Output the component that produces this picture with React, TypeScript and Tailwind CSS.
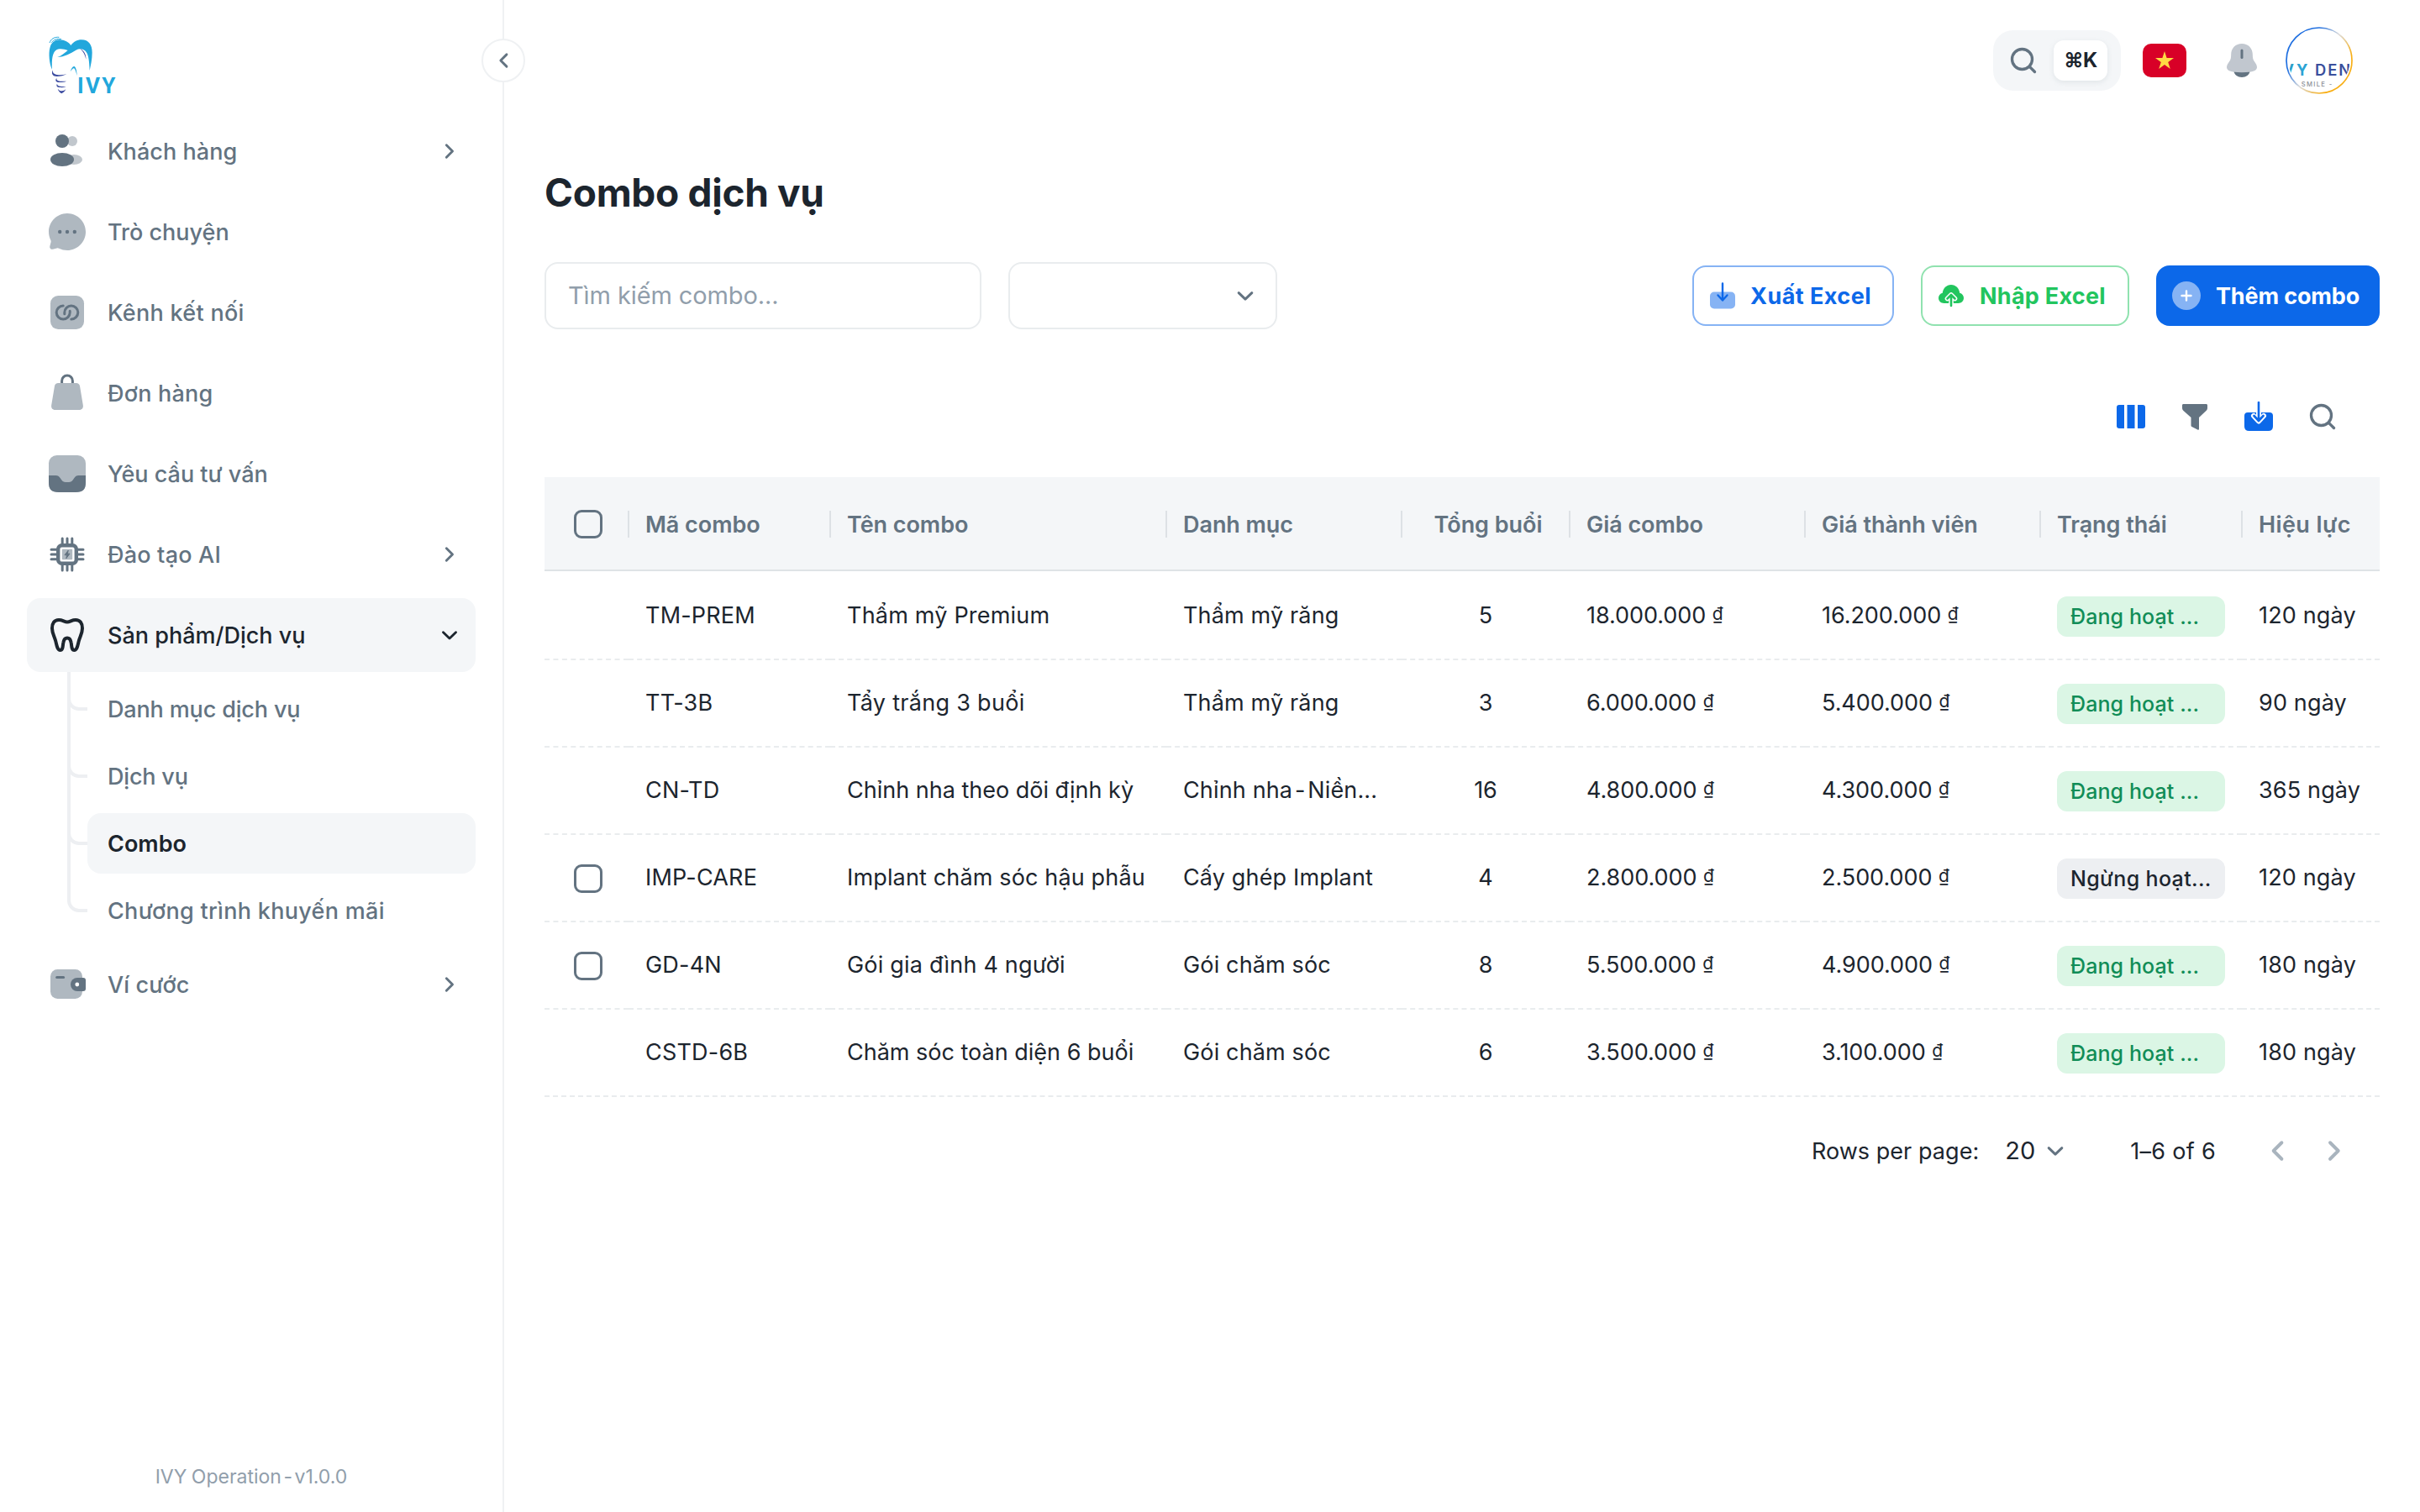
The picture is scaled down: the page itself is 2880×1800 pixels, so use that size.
import type { ReactNode } from "react";

type IconProps = { className?: string };

function Chevron({ d, className = "" }: { d: "left" | "right" | "down"; className?: string }) {
  const paths = { left: "M14.5 7.5L10 12l4.5 4.5", right: "M9.7 7.5l4.5 4.5-4.5 4.5", down: "M7.3 10l4.7 4.5 4.7-4.5" };
  return (
    <svg viewBox="0 0 24 24" className={`shrink-0 ${className}`} fill="none" stroke="currentColor" strokeWidth="1.8" strokeLinecap="round" strokeLinejoin="round">
      <path d={paths[d]} />
    </svg>
  );
}

function NavSvg({ children }: { children: ReactNode }) {
  return <svg viewBox="0 0 24 24" className="size-12 shrink-0" fill="none">{children}</svg>;
}

const UsersIcon = () => (
  <NavSvg>
    <circle cx="15" cy="6" r="3" fill="#c1c7cd" />
    <ellipse cx="16" cy="17" rx="5" ry="3" fill="#c1c7cd" />
    <circle cx="9" cy="6" r="4" fill="currentColor" />
    <ellipse cx="9" cy="17" rx="7" ry="4" fill="currentColor" />
  </NavSvg>
);
const ChatIcon = () => (
  <NavSvg>
    <g transform="translate(-1.2 -1.2) scale(1.1)">
      <path fill="#afb8c0" d="M12 22c5.523 0 10-4.477 10-10S17.523 2 12 2S2 6.477 2 12c0 1.6.376 3.112 1.043 4.453c.178.356.237.763.134 1.148l-.595 2.226a1.3 1.3 0 0 0 1.591 1.592l2.226-.596a1.63 1.63 0 0 1 1.149.133A9.96 9.96 0 0 0 12 22" />
      <g fill="currentColor"><circle cx="8" cy="12" r="1" /><circle cx="12" cy="12" r="1" /><circle cx="16" cy="12" r="1" /></g>
    </g>
  </NavSvg>
);
const LinkIcon = () => (
  <NavSvg>
    <rect x="2" y="2" width="20" height="20" rx="4.600" fill="#afb8c0" />
    <g stroke="currentColor" strokeWidth="1.500" strokeLinecap="round">
      <path d="M9.600 8a4 4 0 1 0 0 8a4 4 0 0 0 4-4v-.9" />
      <path d="M14.400 16a4 4 0 1 0 0-8a4 4 0 0 0-4 4v.9" />
    </g>
  </NavSvg>
);
const BagIcon = () => (
  <NavSvg>
    <path d="M8.800 6.500V4.700a3.200 3.200 0 0 1 6.400 0v1.800" stroke="currentColor" strokeWidth="1.500" />
    <path d="M6.700 6h10.600c1.200 0 2 .7 2.200 1.800l1.900 11.300c.3 1.700-.6 2.900-2.300 2.900H4.900c-1.700 0-2.600-1.200-2.300-2.900L4.500 7.800C4.700 6.700 5.500 6 6.700 6z" fill="#afb8c0" />
  </NavSvg>
);
const InboxIcon = () => (
  <NavSvg>
    <rect x="1" y="1" width="22" height="22" rx="4.800" fill="#afb8c0" />
    <path d="M1 13h4.200c1.300 0 1.900.5 2.600 1.500l.7 1C9.300 16.600 9.900 17 11 17h2c1.100 0 1.700-.4 2.500-1.500l.7-1c.7-1 1.300-1.500 2.600-1.500H23v4c0 4.400-1.600 6-6 6H7c-4.400 0-6-1.600-6-6z" fill="currentColor" />
  </NavSvg>
);
const ChipIcon = () => (
  <NavSvg>
    <path d="M9.100 2.500v4M12 2.500v4M14.900 2.500v4M9.100 17.500v4M12 17.500v4M14.900 17.500v4M2.500 9.100h4M2.500 12h4M2.500 14.900h4M17.500 9.100h4M17.500 12h4M17.500 14.900h4" stroke="currentColor" strokeWidth="1.500" strokeLinecap="round" />
    <rect x="6.600" y="6.600" width="10.800" height="10.800" rx="2.200" stroke="currentColor" strokeWidth="2.200" />
    <rect x="8.900" y="8.900" width="6.200" height="6.200" rx=".5" fill="#afb8c0" />
    <path d="M12.600 9.600l-2.100 2.800h1.300l-.4 2 2.100-2.800h-1.300z" fill="currentColor" stroke="currentColor" strokeWidth=".5" strokeLinejoin="round" />
  </NavSvg>
);
const ToothIcon = () => (
  <NavSvg>
    <path d="M12 4.200C10.200 4.200 9.400 3 7 3 4.300 3 3 5 3 8c0 2.600 1.100 4.300 2 7.200.7 2.200.9 5.800 2.800 5.800 1.800 0 1.500-2.700 1.900-4.600.3-1.600 1-2.600 2.300-2.600s2 1 2.300 2.600c.4 1.900.1 4.600 1.900 4.600 1.900 0 2.100-3.600 2.800-5.800.9-2.900 2-4.600 2-7.200 0-3-1.300-5-4-5-2.400 0-3.200 1.200-5 1.200z" stroke="currentColor" strokeWidth="2" strokeLinejoin="round" />
  </NavSvg>
);
const WalletIcon = () => (
  <NavSvg>
    <rect x="2" y="3" width="19" height="17.500" rx="4.200" fill="#afb8c0" />
    <path d="M5.800 7.700h4" stroke="currentColor" strokeWidth="1.500" strokeLinecap="round" />
    <path d="M18 8h3.500c1 0 1.500.5 1.500 1.500v5c0 1-.5 1.500-1.500 1.500H18a4 4 0 0 1 0-8z" fill="currentColor" />
    <circle cx="17.900" cy="12" r="1.200" fill="#fff" />
  </NavSvg>
);

function SearchIcon({ className = "" }: IconProps) {
  return (
    <svg viewBox="0 0 24 24" className={`size-9 shrink-0 text-[#637381] ${className}`} fill="none" stroke="currentColor" strokeWidth="2.200" strokeLinecap="round">
      <circle cx="11" cy="11" r="8" />
      <path d="M21 21l-4.100-4.100" />
    </svg>
  );
}

function Logo() {
  return (
    <svg viewBox="0 0 360 300" className="h-[100px] w-[120px]" fill="none">
      <path fill="#22a7dc" d="M66 158C56 140 53 100 58 82 62 62 76 52 92 52c20 0 33 9 41 20 9-12 22-20 38-20 26 0 38 18 38 46 0 24-5 44-9 64-1-32-4-56-12-66-9-13-24-14-37-7-20 12-40 24-66 25 14-4 24-13 37-24-14-6-32-8-42-1-12 9-16 30-14 69z" />
      <path stroke="#22a7dc" strokeWidth="3" d="M57 63c4-13 17-22 34-20M64 62c7-10 19-15 35-12" />
      <path fill="#3b4ba0" d="M166 84c13 6 22 19 21 38-3-16-10-29-21-38z" />
      <path fill="#22a7dc" d="M131 166c4-13 9-20 14-19 7 2 9 20 10 33-4-13-7-25-11-26-4 0-8 5-13 12z" />
      <g fill="#3b4ba0">
        <path d="M69 160c-8 14 0 23 14 23 13 0 25-3 35-8-12 2-24 4-34 2-11-1-17-7-15-17z" />
        <path d="M82 189c-7 9-1 15 10 15 10 0 18-1 25-4-9 0-16 1-23 0-9-1-13-4-12-11z" />
        <path d="M84 209c-5 8 1 13 10 13 9 1 16 0 22-3-8 0-14 0-20-1-8-1-12-4-12-9z" />
        <path d="M86 227c3 9 8 14 14 17 7-3 12-8 15-15-4 4-9 6-14 6-6 0-11-3-15-8z" />
      </g>
      <text x="156" y="243" textLength="136" fill="#22a7dc" className="font-[Roboto] text-[78px] font-bold">IVY</text>
    </svg>
  );
}

function Avatar() {
  return (
    <svg viewBox="60 36 240 240" className="size-20 shrink-0" fill="none">
      <defs>
        <linearGradient id="ring" x1="0.1" y1="0.2" x2="0.9" y2="0.8">
          <stop offset="0.2" stopColor="#1f6fe0" />
          <stop offset="0.5" stopColor="#dcdcdc" />
          <stop offset="0.85" stopColor="#f8ae14" />
        </linearGradient>
        <clipPath id="photo"><circle cx="180" cy="156" r="110" /></clipPath>
      </defs>
      <circle cx="180" cy="156" r="117" stroke="url(#ring)" strokeWidth="5" />
      <g clipPath="url(#photo)" className="font-[Inter]">
        <text x="49" y="209" fill="#2a9fc9" className="text-[55px] font-bold">V</text>
        <text x="99" y="209" fill="#2ba3d4" className="text-[55px] font-bold">Y</text>
        <text x="165" y="209" fill="#3a4f9c" className="text-[55px] font-semibold tracking-[6px]">DENTAL</text>
        <text x="116" y="248" fill="#8b8e96" className="text-[23px] font-medium tracking-[4px]">SMILE -</text>
      </g>
    </svg>
  );
}

function NavItem({ icon, label, arrow, active, track = "" }: { icon: ReactNode; label: string; arrow?: "right" | "down"; active?: boolean; track?: string }) {
  return (
    <div className={`flex h-[88px] items-center rounded-2xl pr-[15px] pl-6 ${active ? "bg-[#f4f6f8] text-[#1c252e]" : "text-[#637381]"}`}>
      {icon}
      <span className={`ml-6 grow pt-[2px] text-[27px] font-medium whitespace-nowrap ${track}`}>{label}</span>
      {arrow && <Chevron d={arrow} className="size-8 scale-120" />}
    </div>
  );
}

function SubItem({ label, active, last, track = "" }: { label: string; active?: boolean; last?: boolean; track?: string }) {
  return (
    <div className="relative flex h-[72px] pl-6">
      {!last && <div className="absolute -top-2 -bottom-2 left-0 w-1 bg-[#edeff2]" />}
      <div className="absolute -top-2 left-0 h-[46px] w-6 rounded-bl-[14px] border-b-4 border-l-4 border-[#edeff2]" />
      <div className={`flex grow items-center rounded-2xl pt-[2px] pl-6 text-[27px] whitespace-nowrap ${active ? "bg-[#f4f6f8] font-semibold text-[#1c252e]" : "font-medium text-[#637381]"} ${track}`}>{label}</div>
    </div>
  );
}

function Sidebar() {
  return (
    <aside className="relative flex w-[600px] shrink-0 flex-col border-r-2 border-[#eff1f3]">
      <div className="h-[136px] pt-[30px] pl-10"><Logo /></div>
      <nav className="flex flex-col gap-2 pr-8 pl-8">
        <NavItem icon={<UsersIcon />} label="Khách hàng" arrow="right" track="tracking-[0.05px]" />
        <NavItem icon={<ChatIcon />} label="Trò chuyện" />
        <NavItem icon={<LinkIcon />} label="Kênh kết nối" track="tracking-[0.3px]" />
        <NavItem icon={<BagIcon />} label="Đơn hàng" track="tracking-[0.2px]" />
        <NavItem icon={<InboxIcon />} label="Yêu cầu tư vấn" />
        <NavItem icon={<ChipIcon />} label="Đào tạo AI" arrow="right" track="tracking-[0.2px]" />
        <div>
          <NavItem icon={<ToothIcon />} label="Sản phẩm/Dịch vụ" arrow="down" active />
          <div className="flex flex-col gap-2 pt-2 pl-12">
            <SubItem label="Danh mục dịch vụ" track="tracking-[-0.15px]" />
            <SubItem label="Dịch vụ" track="tracking-[-0.2px]" />
            <SubItem label="Combo" active />
            <SubItem label="Chương trình khuyến mãi" last track="tracking-[0.3px]" />
          </div>
        </div>
        <NavItem icon={<WalletIcon />} label="Ví cước" arrow="right" track="tracking-[0.15px]" />
      </nav>
      <div className="mt-auto pb-[27px] text-center text-[23px] leading-[30px] text-[#919eab] [word-spacing:-1px]">
        IVY Operation<span className="[word-spacing:-4px]"> - </span>v1.0.0
      </div>
      <div className="absolute top-[46px] -right-[27px] z-10 flex size-[52px] items-center justify-center rounded-full border-2 border-[#eff1f3] bg-white text-[#637381]">
        <Chevron d="left" className="size-[38px]" />
      </div>
    </aside>
  );
}

function TopBar() {
  return (
    <header className="flex h-36 shrink-0 items-center justify-end pr-20">
      <div className="flex h-[72px] w-[152px] items-center justify-between rounded-3xl bg-[#f4f6f8] pr-4 pl-[18px]">
        <SearchIcon />
        <div className="flex h-12 w-16 items-center justify-center rounded-xl bg-white text-[24px] font-bold tracking-[-0.5px] text-[#1c252e] shadow-[0_2px_6px_rgba(145,158,171,0.2)]">⌘K</div>
      </div>
      <div className="ml-[26px] flex h-10 w-[52px] items-center justify-center rounded-[10px] bg-[#d80027]">
        <svg viewBox="0 0 24 24" className="size-6"><path fill="#ffda44" d="M12 .9l2.600 8h8.400l-6.800 5 2.600 8-6.800-5-6.800 5 2.600-8-6.800-5h8.400z" /></svg>
      </div>
      <svg viewBox="0 0 36 40" className="ml-12 h-10 w-9 shrink-0" fill="none">
        <path fill="#637381" d="M8.500 33h19c-.5 4-4.500 7-9.500 7s-9-3-9.500-7z" />
        <path fill="#c1c7cf" d="M18 0C10.500 0 5.400 5.400 5.200 12.500c-.1 4-.2 6-2.300 9C1.200 24 0 25.800 0 28c0 3.800 4 6.200 18 6.200S36 31.800 36 28c0-2.200-1.200-4-2.900-6.500-2.100-3-2.200-5-2.300-9C30.600 5.400 25.500 0 18 0z" />
        <path stroke="#637381" strokeWidth="3" strokeLinecap="round" d="M18 8v8.500" />
      </svg>
      <div className="ml-[34px]"><Avatar /></div>
    </header>
  );
}

function Actions() {
  return (
    <div className="mt-[47px] flex h-20 items-center">
      <div className="flex h-20 w-[520px] items-center rounded-2xl border-2 border-[#e9ecee] pl-[26px] text-[29px] tracking-[-0.1px] text-[#919eab]">Tìm kiếm combo...</div>
      <div className="ml-8 flex h-20 w-[320px] items-center justify-end rounded-2xl border-2 border-[#e9ecee] pr-[16px] text-[#637381]">
        <Chevron d="down" className="size-10" />
      </div>
      <div className="ml-auto flex gap-8 text-[27px] font-bold">
        <div className="flex h-[72px] w-[240px] items-center rounded-2xl border-2 border-[#86b3f4] pl-[19px] text-[#0c68e9]">
          <svg viewBox="0 0 30 32" className="mr-[18px] h-8 w-[30px] shrink-0" fill="none">
            <rect y="11.500" width="30" height="20" rx="5" fill="#86b3f4" />
            <path d="M15 1.500v19M9.500 15.500l5.500 6 5.500-6" stroke="currentColor" strokeWidth="2.400" strokeLinecap="round" strokeLinejoin="round" />
          </svg>
          <span className="pt-[2px] tracking-[0.45px] whitespace-nowrap">Xuất Excel</span>
        </div>
        <div className="flex h-[72px] w-[248px] items-center rounded-2xl border-2 border-[#90e2af] pl-[19px] text-[#22c55e]">
          <svg viewBox="0 0 30 28" className="mr-[19px] h-7 w-[30px] shrink-0" fill="none">
            <path fill="currentColor" d="M6.500 23C2.800 23 0 20.300 0 16.800c0-3 1.900-5.400 4.800-6.100C5.300 5.300 9.500 1 15 1s9.700 4.300 10.200 9.700c2.900.7 4.800 3.100 4.800 6.100 0 3.500-2.800 6.200-6.500 6.200z" />
            <path d="M15 26V14M10.500 17.500l4.500-4.500 4.500 4.500" stroke="#fff" strokeWidth="5.600" strokeLinecap="round" strokeLinejoin="round" />
            <path d="M15 26V14M10.500 17.500l4.500-4.500 4.500 4.500" stroke="currentColor" strokeWidth="2.600" strokeLinecap="round" strokeLinejoin="round" />
          </svg>
          <span className="pt-[2px] tracking-[0.25px] whitespace-nowrap">Nhập Excel</span>
        </div>
        <div className="flex h-[72px] w-[266px] items-center rounded-2xl bg-[#0c68e9] pl-[19px] text-white">
          <svg viewBox="0 0 34 34" className="mr-[18px] size-[34px] shrink-0" fill="none">
            <circle cx="17" cy="17" r="17" fill="#86b3f4" />
            <path d="M17 11.500v11M11.500 17h11" stroke="#fff" strokeWidth="2.400" strokeLinecap="round" />
          </svg>
          <span className="pt-[2px] tracking-[-0.15px] whitespace-nowrap">Thêm combo</span>
        </div>
      </div>
    </div>
  );
}

function Toolbar() {
  return (
    <div className="mt-[32px] flex h-[144px] items-center justify-end gap-10 pr-[50px]">
      <svg viewBox="0 0 36 36" className="size-9" fill="#0c68e9">
        <path d="M4 4h6v28H4a3 3 0 0 1-3-3V7a3 3 0 0 1 3-3zM13.500 4h9v28h-9zM26 4h6a3 3 0 0 1 3 3v22a3 3 0 0 1-3 3h-6z" />
      </svg>
      <svg viewBox="0 0 36 36" className="size-9" fill="#637381">
        <path d="M4.500 3h27C32.400 3 33 3.600 33 4.500v3c0 1.500-.5 2.500-1.500 3.500L23 19v13.500c0 1-.8 1.600-1.700 1.100L14.500 30c-.8-.4-1-1-1-1.800V19L4.500 11C3.500 10 3 9 3 7.500v-3C3 3.600 3.600 3 4.500 3z" />
      </svg>
      <svg viewBox="0 0 36 36" className="size-9" fill="none">
        <path fill="#0c68e9" d="M5 13h26c2.600 0 4 1.400 4 4v12c0 4-1.600 6-5.500 6h-23C2.600 35 1 33 1 29V17c0-2.600 1.400-4 4-4z" />
        <path d="M18 13v9M12 17l6 6.500 6-6.500" stroke="#fff" strokeWidth="6" strokeLinecap="round" strokeLinejoin="round" />
        <path d="M18 1v21.500M12.500 17l5.500 6 5.500-6" stroke="#0c68e9" strokeWidth="2.600" strokeLinecap="round" strokeLinejoin="round" />
      </svg>
      <SearchIcon />
    </div>
  );
}

const COLS = "grid grid-cols-[100px_240px_400px_280px_200px_280px_280px_240px_164px]";

function Checkbox() {
  return <div className="size-[34px] rounded-[9px] border-3 border-[#637381]" />;
}

function Price({ value }: { value: string }) {
  return (
    <span className="tracking-[-0.05px]">
      {value} <span className="relative -top-[4px] text-[21px]">₫</span>
    </span>
  );
}

type Row = { code: string; name: string; nameTrack: string; cat: ReactNode; n: number; price: string; member: string; off?: boolean; days: number; check?: boolean };

const ROWS: Row[] = [
  { code: "TM-PREM", name: "Thẩm mỹ Premium", nameTrack: "tracking-[0.2px]", cat: "Thẩm mỹ răng", n: 5, price: "18.000.000", member: "16.200.000", days: 120 },
  { code: "TT-3B", name: "Tẩy trắng 3 buổi", nameTrack: "tracking-[0.3px]", cat: "Thẩm mỹ răng", n: 3, price: "6.000.000", member: "5.400.000", days: 90 },
  { code: "CN-TD", name: "Chỉnh nha theo dõi định kỳ", nameTrack: "tracking-[0px]", cat: <span>Chỉnh nha<span className="[word-spacing:-5px]"> - </span>Niền...</span>, n: 16, price: "4.800.000", member: "4.300.000", days: 365 },
  { code: "IMP-CARE", name: "Implant chăm sóc hậu phẫu", nameTrack: "tracking-[0.15px]", cat: "Cấy ghép Implant", n: 4, price: "2.800.000", member: "2.500.000", off: true, days: 120, check: true },
  { code: "GD-4N", name: "Gói gia đình 4 người", nameTrack: "tracking-[0.2px]", cat: "Gói chăm sóc", n: 8, price: "5.500.000", member: "4.900.000", days: 180, check: true },
  { code: "CSTD-6B", name: "Chăm sóc toàn diện 6 buổi", nameTrack: "tracking-[0px]", cat: "Gói chăm sóc", n: 6, price: "3.500.000", member: "3.100.000", days: 180 },
];

const HEADS = ["Mã combo", "Tên combo", "Danh mục", "Tổng buổi", "Giá combo", "Giá thành viên", "Trạng thái", "Hiệu lực"];

function Cell({ first, className = "", children }: { first: boolean; className?: string; children?: ReactNode }) {
  return (
    <div className={`flex min-w-0 items-center border-t-2 border-dashed whitespace-nowrap ${first ? "border-transparent" : "border-[#e9ecee]"} ${className}`}>{children}</div>
  );
}

function Table() {
  return (
    <div className="w-[2184px] overflow-hidden text-[27px] text-[#1c252e]">
      <div className={`${COLS} h-28 border-b-2 border-[#dfe3e6] bg-[#f4f6f8] font-semibold text-[#637381]`}>
        <div className="relative flex items-center justify-center pt-[2px] pl-[3px]">
          <Checkbox />
          <div className="absolute top-10 -right-px h-8 w-[2px] bg-[#dde1e5]" />
        </div>
        {HEADS.map((h, i) => (
          <div key={h} className={`relative flex items-center pt-[4px] whitespace-nowrap ${i === 3 ? "justify-center pl-[6px]" : "pl-5"} ${i === 7 ? "tracking-[0.4px]" : "tracking-[-0.05px]"}`}>
            {h}
            {i < 7 && <div className="absolute top-10 -right-px h-8 w-[2px] bg-[#dde1e5]" />}
          </div>
        ))}
      </div>
      {ROWS.map((r, i) => {
        const first = i === 0;
        return (
          <div key={r.code} className={`${COLS} h-[104px]`}>
            <Cell first={first} className="justify-center pt-[2px] pl-[3px]">{r.check && <Checkbox />}</Cell>
            <Cell first={first} className="pl-5 tracking-[0.2px]">{r.code}</Cell>
            <Cell first={first} className={`pl-5 ${r.nameTrack}`}>{r.name}</Cell>
            <Cell first={first} className="pl-5 tracking-[0.15px]">{r.cat}</Cell>
            <Cell first={first} className="justify-center">{r.n}</Cell>
            <Cell first={first} className="pl-5"><Price value={r.price} /></Cell>
            <Cell first={first} className="pl-5"><Price value={r.member} /></Cell>
            <Cell first={first} className="px-5 pt-[2px]">
              <div className={`flex h-12 w-[200px] items-center rounded-xl pt-[2px] pl-4 text-[25px] font-medium ${r.off ? "bg-[#edeff2] tracking-[0.35px] text-[#1c252e]" : "bg-[#dbf6e5] tracking-[0.1px] text-[#118d57]"}`}>
                {r.off ? "Ngừng hoạt..." : "Đang hoạt ..."}
              </div>
            </Cell>
            <Cell first={first} className="pl-5 tracking-[0.15px]">{r.days} ngày</Cell>
          </div>
        );
      })}
      <div className="border-t-2 border-dashed border-[#e9ecee]" />
      <div className="flex h-32 items-center justify-end pr-7 whitespace-nowrap">
        <span className="pt-[2px] tracking-[0.05px]">Rows per page:</span>
        <span className="ml-[31px] text-[29px]">20</span>
        <Chevron d="down" className="ml-1 size-10 text-[#637381]" />
        <span className="ml-[69px] pt-[2px] tracking-[0.3px]">1–6 of 6</span>
        <Chevron d="left" className="ml-[47px] size-[52px] text-[#a9b4be]" />
        <Chevron d="right" className="ml-[16px] size-[52px] text-[#a9b4be]" />
      </div>
    </div>
  );
}

export default function App() {
  return (
    <div className="flex h-[1800px] w-[2880px] overflow-hidden bg-white font-[Inter,'Noto_Sans',sans-serif]">
      <Sidebar />
      <main className="flex grow flex-col">
        <TopBar />
        <div className="pr-12 pl-12">
          <h1 className="mt-[49px] text-[46px] leading-[72px] font-bold tracking-[-0.3px] text-[#1c252e]">Combo dịch vụ</h1>
          <Actions />
          <Toolbar />
          <Table />
        </div>
      </main>
    </div>
  );
}
